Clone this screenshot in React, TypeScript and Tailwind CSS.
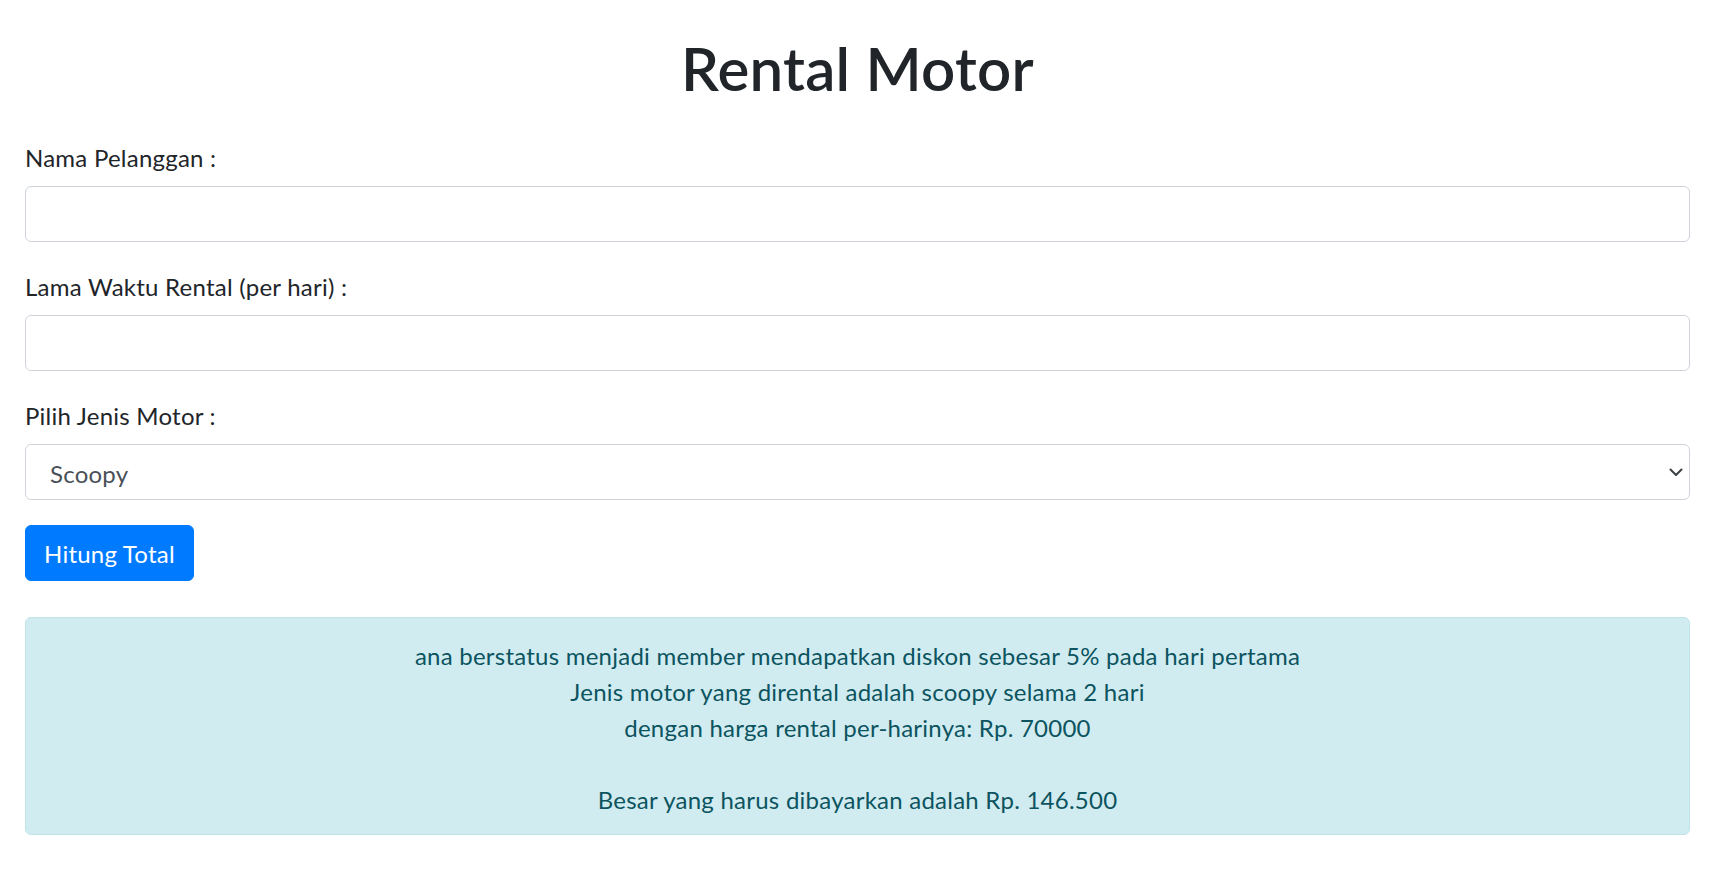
import React from 'react';

const lines = [
  'ana berstatus menjadi member mendapatkan diskon sebesar 5% pada hari pertama',
  'Jenis motor yang dirental adalah scoopy selama 2 hari',
  'dengan harga rental per-harinya: Rp. 70000',
];

export default function App() {
  return (
    <div
      className="min-h-screen bg-white pl-[25px] pr-[29px] pt-[32px] text-[#212529] text-[24px] leading-[36px] tracking-[0.01em]"
      style={{ fontFamily: '"Segoe UI", Lato, "Noto Sans", sans-serif' }}
    >
      <h1 className="text-center text-[60px] leading-[72px] font-semibold mb-[34px]">Rental Motor</h1>

      <form onSubmit={(e) => e.preventDefault()}>
        <div className="mb-[25px]">
          <label className="block pt-[2px] mb-[10px]">Nama Pelanggan :</label>
          <input type="text" className="block w-full h-[56px] px-[18px] border border-[#ced4da] rounded-[6px] bg-white text-[#495057] outline-none" />
        </div>

        <div className="mb-[25px]">
          <label className="block pt-[2px] mb-[10px]">Lama Waktu Rental (per hari) :</label>
          <input type="text" className="block w-full h-[56px] px-[18px] border border-[#ced4da] rounded-[6px] bg-white text-[#495057] outline-none" />
        </div>

        <div className="mb-[25px]">
          <label className="block pt-[2px] mb-[10px]">Pilih Jenis Motor :</label>
          <div className="relative">
            <select className="block w-full h-[56px] pl-[24px] pr-[40px] pt-[4px] border border-[#ced4da] rounded-[6px] bg-white text-[#495057] appearance-none outline-none">
              <option>Scoopy</option>
              <option>Beat</option>
              <option>Vario</option>
            </select>
            <svg
              className="absolute right-[7px] top-[24px] pointer-events-none"
              width="14"
              height="9"
              viewBox="0 0 14 9"
              fill="none"
            >
              <path d="M1.5 1.5L7 7L12.5 1.5" stroke="#3c4043" strokeWidth="2" strokeLinecap="round" strokeLinejoin="round" />
            </svg>
          </div>
        </div>

        <button type="submit" className="h-[56px] px-[18px] pt-[2px] bg-[#007bff] text-white rounded-[6px] border border-[#007bff]">
          Hitung Total
        </button>
      </form>

      <div className="mt-[36px] border border-[#bee5eb] bg-[#d1ecf1] text-[#0c5460] rounded-[6px] px-[30px] pt-[20px] pb-[16px] text-center">
        {lines.map((l) => (
          <div key={l}>{l}</div>
        ))}
        <div className="h-[36px]" />
        <div>Besar yang harus dibayarkan adalah Rp. 146.500</div>
      </div>
    </div>
  );
}
